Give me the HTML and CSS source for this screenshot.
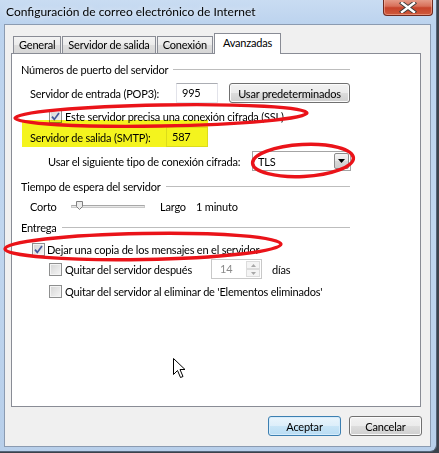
FILE: index.html
```html
<!DOCTYPE html>
<html lang="es">
<head>
<meta charset="utf-8">
<title>Configuración de correo electrónico de Internet</title>
<link rel="stylesheet" href="styles.css">
</head>
<body>
<div class="window">
  <div class="titlebar">
    <span class="title">Configuración de correo electrónico de Internet</span>
    <div class="close">
      <svg width="18" height="11" viewBox="0 0 18 11"><path d="M3 1 L15 10 M15 1 L3 10" stroke="#3a3a3a" stroke-width="4.2" stroke-linecap="square"/><path d="M3 1 L15 10 M15 1 L3 10" stroke="#fff" stroke-width="2.4" stroke-linecap="square"/></svg>
    </div>
  </div>
  <div class="client">
    <div class="tabs">
      <div class="tab">General</div>
      <div class="tab">Servidor de salida</div>
      <div class="tab">Conexión</div>
      <div class="tab active">Avanzadas</div>
    </div>
    <div class="panel">
      <div class="group g1"><span>Números de puerto del servidor</span><i class="rule"></i></div>
      <div class="row r-pop">
        <span class="lbl lbl-pop">Servidor de entrada (POP3):</span>
        <span class="field">995</span>
        <span class="btn btn-defaults">Usar predeterminados</span>
      </div>
      <div class="row r-ssl">
        <span class="cb"><svg width="11" height="11" viewBox="0 0 11 11"><path d="M2 5.6 L4.3 8.4 L9 2" fill="none" stroke="#44589a" stroke-width="1.7"/></svg></span>
        <span>Este servidor precisa una conexión cifrada (SSL)</span>
      </div>
      <div class="row r-smtp">
        <span class="lbl lbl-smtp">Servidor de salida (SMTP):</span>
        <span class="field field-faint">587</span>
      </div>
      <div class="row r-enc">
        <span class="lbl lbl-enc">Usar el siguiente tipo de conexión cifrada:</span>
        <span class="combo"><span class="combo-val">TLS</span><span class="combo-btn"><svg width="7" height="4" viewBox="0 0 7 4"><path d="M0 0 H7 L3.5 4 Z" fill="#000"/></svg></span></span>
      </div>
      <div class="group g2"><span>Tiempo de espera del servidor</span><i class="rule"></i></div>
      <div class="row r-slider">
        <span class="lbl lbl-corto">Corto</span>
        <span class="slider"><span class="track"></span><svg class="thumb" width="7" height="9" viewBox="0 0 7 9"><path d="M0.5 0.5 H6.5 V5.5 L3.5 8.5 L0.5 5.5 Z" fill="#ececec" stroke="#808080"/></svg></span>
        <span class="lbl lbl-largo">Largo</span>
        <span>1 minuto</span>
      </div>
      <div class="group g3"><span>Entrega</span><i class="rule"></i></div>
      <div class="row r-dejar">
        <span class="cb"><svg width="11" height="11" viewBox="0 0 11 11"><path d="M2 5.6 L4.3 8.4 L9 2" fill="none" stroke="#44589a" stroke-width="1.7"/></svg></span>
        <span>Dejar una copia de los mensajes en el servidor</span>
      </div>
      <div class="row r-quitar">
        <span class="cb"></span>
        <span class="lbl lbl-quitar">Quitar del servidor después</span>
        <span class="spin"><span class="spin-val">14</span><span class="spin-btns"><span class="spin-b"><svg width="5" height="3" viewBox="0 0 5 3"><path d="M0 3 L2.5 0 L5 3 Z" fill="#a8a8a8"/></svg></span><span class="spin-b"><svg width="5" height="3" viewBox="0 0 5 3"><path d="M0 0 L2.5 3 L5 0 Z" fill="#a8a8a8"/></svg></span></span></span>
        <span class="lbl-dias">días</span>
      </div>
      <div class="row r-quitar2">
        <span class="cb"></span>
        <span>Quitar del servidor al eliminar de 'Elementos eliminados'</span>
      </div>
    </div>
    <div class="buttons">
      <span class="btn btn-main btn-default">Aceptar</span>
      <span class="btn btn-main">Cancelar</span>
    </div>
  </div>
  <div class="highlight"></div>
  <svg class="marks" width="439" height="453" viewBox="0 0 439 453">
    <g fill="none" stroke="#ea1319" stroke-width="3.4">
      <ellipse cx="161" cy="115.5" rx="146" ry="10.5" transform="rotate(-1 161 115.5)"/>
      <ellipse cx="303" cy="160.5" rx="50.5" ry="16" transform="rotate(-3 303 160.5)"/>
      <ellipse cx="143" cy="246.5" rx="138" ry="13" transform="rotate(-1 143 246.5)"/>
    </g>
    <path d="M173.5 358.5 V374.5 L177.5 370.5 L180.5 377.5 L183 376.5 L180 369.5 L185 369.5 Z" fill="#fff" stroke="#000" stroke-width="1"/>
  </svg>
</div>
</body>
</html>
```
FILE: styles.css
```css
html, body {
  margin: 0;
  padding: 0;
}
body {
  width: 439px;
  height: 453px;
  overflow: hidden;
  background: #3c424b;
  font-family: "Lato", "Liberation Sans", sans-serif;
  font-size: 11px;
  letter-spacing: -0.2px;
  color: #000;
}
.window {
  position: relative;
  width: 437px;
  height: 452px;
  box-sizing: border-box;
  display: flex;
  flex-direction: column;
  background: linear-gradient(180deg, #c9dcf2 0, #bcd3ee 24px, #c0d6ef 50%, #b8cfea 100%);
  border-right: 1px solid #55657a;
  border-bottom: 1px solid #55657a;
  border-radius: 0 0 7px 0;
}
.titlebar {
  height: 24px;
  display: flex;
  align-items: flex-start;
}
.title {
  padding-left: 6px;
  line-height: 24px;
  font-size: 12px;
  letter-spacing: 0;
  text-shadow: 0 0 6px rgba(255, 255, 255, 0.9);
}
.close {
  margin-left: auto;
  margin-right: 3px;
  width: 48px;
  height: 16px;
  margin-top: -1px;
  border: 1px solid #6e2a20;
  border-top: none;
  border-radius: 0 0 4px 4px;
  background: linear-gradient(180deg, #e7a18f 0, #d8705a 45%, #c7432b 55%, #cf5a3c 100%);
  box-shadow: inset 0 0 0 1px rgba(255, 205, 190, 0.45);
  display: flex;
  align-items: center;
  justify-content: center;
}
.client {
  flex: 1;
  margin: 0 5px 4px 4px;
  border: 1px solid #8b9bb1;
  background: #f0f0f0;
  display: flex;
  flex-direction: column;
  padding-top: 8px;
}
.tabs {
  display: flex;
  align-items: flex-end;
  height: 20px;
  padding-left: 8px;
}
.tab {
  height: 17px;
  box-sizing: border-box;
  padding: 0 5px;
  margin-right: 1px;
  border: 1px solid #898c95;
  border-bottom: none;
  background: linear-gradient(180deg, #f3f3f3 0, #ebebeb 50%, #dedede 50%, #d6d6d6 100%);
  line-height: 16px;
  white-space: nowrap;
}
.tab.active {
  height: 21px;
  margin-bottom: -1px;
  padding: 0 8px;
  background: #fff;
  position: relative;
  z-index: 1;
  line-height: 18px;
}
.panel {
  height: 354px;
  box-sizing: border-box;
  margin: 0 9px 0 6px;
  border: 1px solid #898c95;
  background: #fff;
  padding-top: 4px;
}
.group {
  display: flex;
  align-items: center;
  margin-left: 9px;
  width: 329px;
  height: 22px;
}
.rule {
  flex: 1;
  height: 0;
  border-top: 1px solid #bdbdbd;
  margin-left: 5px;
  margin-top: 1px;
}
.row {
  display: flex;
  align-items: center;
  white-space: nowrap;
}
.r-pop { height: 26px; padding-left: 18px; }
.r-ssl { height: 20px; padding-left: 37px; }
.r-smtp { height: 22px; padding-left: 18px; }
.r-enc { height: 26px; padding-left: 36px; }
.g2 { height: 24px; }
.r-slider { height: 16px; padding-left: 18px; }
.g3 { height: 26px; }
.r-dejar { height: 18px; padding-left: 20px; }
.r-quitar { height: 22px; padding-left: 37px; }
.r-quitar2 { height: 22px; padding-left: 37px; }
.lbl-pop { width: 146px; }
.lbl-smtp { width: 136px; }
.lbl-enc { width: 204px; }
.lbl-corto { width: 41px; }
.lbl-largo { width: 36px; }
.lbl-quitar { width: 146px; }
.lbl-dias { margin-left: 10px; }
.field {
  width: 42px;
  height: 20px;
  box-sizing: border-box;
  border: 1px solid #e2e3ea;
  border-top-color: #abadb3;
  padding-left: 5px;
  line-height: 18px;
  background: #fff;
}
.field-faint {
  border-color: #e6e6e6;
}
.btn {
  box-sizing: border-box;
  height: 20px;
  border: 1px solid #707070;
  border-radius: 3px;
  background: linear-gradient(180deg, #f2f2f2 0, #ebebeb 50%, #dddddd 50%, #cfcfcf 100%);
  box-shadow: inset 0 0 0 1px #fbfbfb;
  display: flex;
  align-items: center;
  justify-content: center;
}
.btn-defaults {
  width: 121px;
  margin-left: 11px;
}
.cb {
  width: 13px;
  height: 13px;
  box-sizing: border-box;
  border: 1px solid #8e8f8f;
  background: linear-gradient(135deg, #d4d4d4 0, #f6f6f6 100%);
  box-shadow: inset 0 0 0 1px #f4f4f4;
  margin-right: 2px;
  display: flex;
  align-items: center;
  justify-content: center;
  flex: none;
}
.r-ssl .cb, .r-quitar .cb, .r-quitar2 .cb { margin-right: 3px; }
.combo {
  width: 99px;
  height: 20px;
  box-sizing: border-box;
  border: 1px solid #a4a4a4;
  background: #fff;
  display: flex;
  align-items: center;
}
.combo-val {
  flex: 1;
  padding-left: 5px;
}
.combo-btn {
  width: 15px;
  height: 16px;
  box-sizing: border-box;
  margin-right: 1px;
  border: 1px solid #8c8c8c;
  border-radius: 2px;
  background: linear-gradient(180deg, #f4f4f4 0, #e6e6e6 50%, #d8d8d8 50%, #cdcdcd 100%);
  display: flex;
  align-items: center;
  justify-content: center;
}
.slider {
  position: relative;
  width: 74px;
  height: 12px;
  margin-right: 15px;
  display: flex;
  align-items: center;
}
.track {
  width: 74px;
  height: 3px;
  box-sizing: border-box;
  border: 1px solid #c9c9c9;
  border-top-color: #a8a8a8;
  background: #e8e8e8;
}
.thumb {
  position: absolute;
  left: 5px;
  top: 1px;
}
.spin {
  width: 51px;
  height: 20px;
  box-sizing: border-box;
  border: 1px solid #c8c8c8;
  background: #fff;
  display: flex;
  align-items: stretch;
  color: #8a8a8a;
}
.spin-val {
  flex: 1;
  padding-left: 8px;
  line-height: 18px;
}
.spin-btns {
  width: 14px;
  display: flex;
  flex-direction: column;
  margin: 1px 1px 1px 0;
}
.spin-b {
  flex: 1;
  border: 1px solid #dcdcdc;
  background: #f4f4f4;
  display: flex;
  align-items: center;
  justify-content: center;
}
.buttons {
  display: flex;
  justify-content: flex-end;
  gap: 8px;
  padding-right: 8px;
  margin-top: 9px;
}
.btn-main {
  width: 73px;
}
.btn-default {
  border-color: #3c7fb1;
  background: linear-gradient(180deg, #eaf5fc 0, #dceefa 50%, #c8e5f7 50%, #b9dcf3 100%);
  box-shadow: inset 0 0 0 1px #d6ecfb;
}
.highlight {
  position: absolute;
  left: 22px;
  top: 120px;
  width: 186px;
  height: 27px;
  background: #f4f41e;
  mix-blend-mode: multiply;
  pointer-events: none;
}
.marks {
  position: absolute;
  left: 0;
  top: 0;
  pointer-events: none;
}
```
